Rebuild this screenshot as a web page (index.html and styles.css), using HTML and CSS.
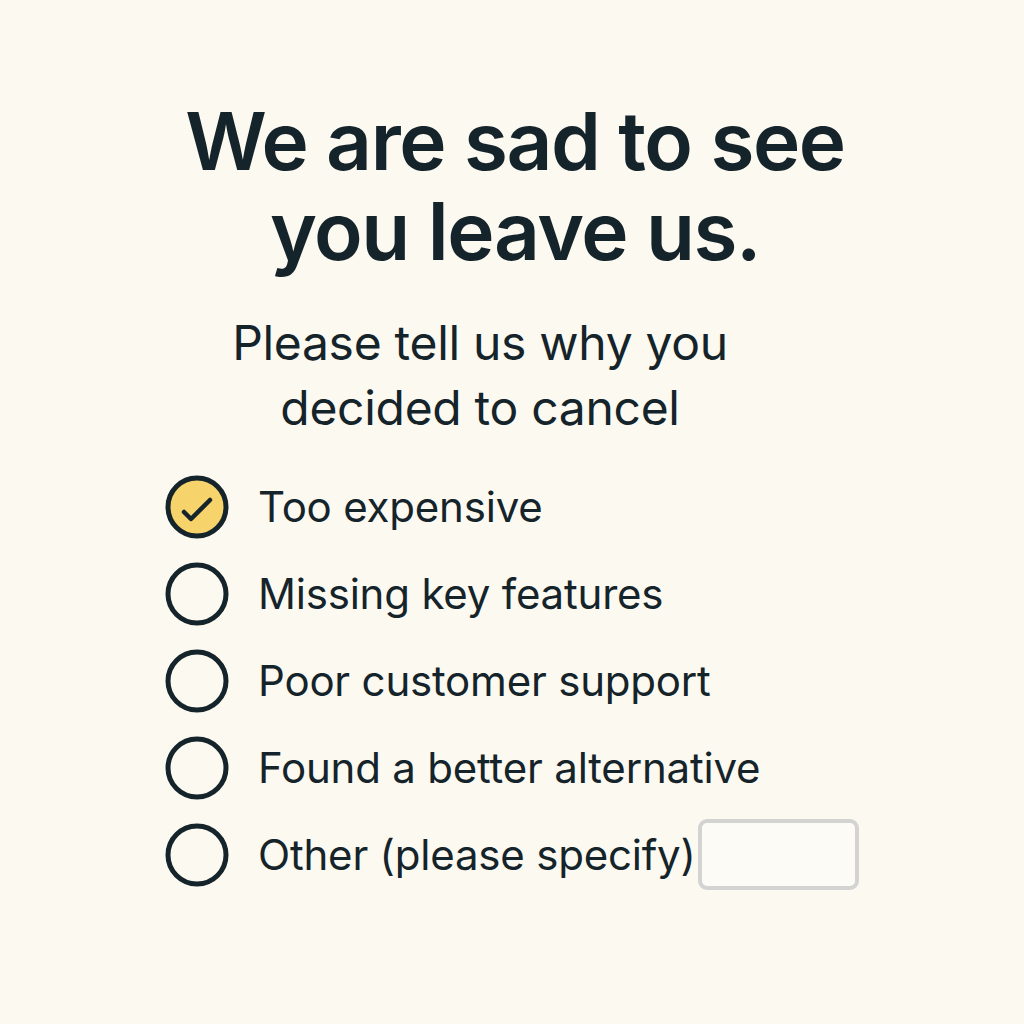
FILE: index.html
```html
<!DOCTYPE html>
<html lang="en">
<head>
    <meta charset="UTF-8">
    <title>Cancel Subscription</title>
    <link rel="stylesheet" href="styles.css">
</head>
<body>
    <div class="page">
        <h1 class="title">We are sad to see<br>you leave us.</h1>
        <p class="subtitle">Please tell us why you<br>decided to cancel</p>

        <ul class="reasons">
            <li class="reason checked">
                <span class="radio">
                    <svg viewBox="0 0 64 64" width="64" height="64">
                        <circle cx="32" cy="32" r="29" fill="#f7d46b" stroke="#15242a" stroke-width="5"/>
                        <path d="M19 37 L26 44 L45 25" fill="none" stroke="#15242a" stroke-width="4.5" stroke-linecap="round" stroke-linejoin="round"/>
                    </svg>
                </span>
                <span class="label">Too expensive</span>
            </li>
            <li class="reason">
                <span class="radio">
                    <svg viewBox="0 0 64 64" width="64" height="64">
                        <circle cx="32" cy="32" r="29" fill="none" stroke="#15242a" stroke-width="5"/>
                    </svg>
                </span>
                <span class="label">Missing key features</span>
            </li>
            <li class="reason">
                <span class="radio">
                    <svg viewBox="0 0 64 64" width="64" height="64">
                        <circle cx="32" cy="32" r="29" fill="none" stroke="#15242a" stroke-width="5"/>
                    </svg>
                </span>
                <span class="label">Poor customer support</span>
            </li>
            <li class="reason">
                <span class="radio">
                    <svg viewBox="0 0 64 64" width="64" height="64">
                        <circle cx="32" cy="32" r="29" fill="none" stroke="#15242a" stroke-width="5"/>
                    </svg>
                </span>
                <span class="label">Found a better alternative</span>
            </li>
            <li class="reason">
                <span class="radio">
                    <svg viewBox="0 0 64 64" width="64" height="64">
                        <circle cx="32" cy="32" r="29" fill="none" stroke="#15242a" stroke-width="5"/>
                    </svg>
                </span>
                <span class="label">Other (please specify)</span>
                <input class="other-input" type="text">
            </li>
        </ul>
    </div>
</body>
</html>
```

FILE: styles.css
```css
html, body {
    margin: 0;
    padding: 0;
}

body {
    font-family: 'Inter', 'Liberation Sans', sans-serif;
    background-color: #fcf9f1;
    color: #15242a;
    width: 1024px;
    height: 1024px;
    overflow: hidden;
}

.page {
    padding-top: 96px;
}

.title {
    margin: 0;
    padding-left: 6px;
    font-size: 80px;
    line-height: 90px;
    font-weight: 600;
    text-align: center;
    letter-spacing: -1.4px;
}

.subtitle {
    margin: 34px 0 0 200px;
    width: 560px;
    font-size: 48px;
    line-height: 65px;
    font-weight: 400;
    text-align: center;
    letter-spacing: -0.3px;
}

.reasons {
    list-style: none;
    margin: 23px 0 0 165px;
    padding: 0;
}

.reason {
    display: flex;
    align-items: center;
    height: 87px;
}

.radio {
    display: flex;
    width: 64px;
    height: 64px;
    margin-right: 29px;
}

.label {
    font-size: 42px;
    line-height: 48px;
    letter-spacing: -0.2px;
}

.other-input {
    margin-left: 2px;
    width: 161px;
    height: 71px;
    box-sizing: border-box;
    border: 4px solid #d3d3d1;
    border-radius: 9px;
    background-color: #fdfbf6;
    outline: none;
}
```
